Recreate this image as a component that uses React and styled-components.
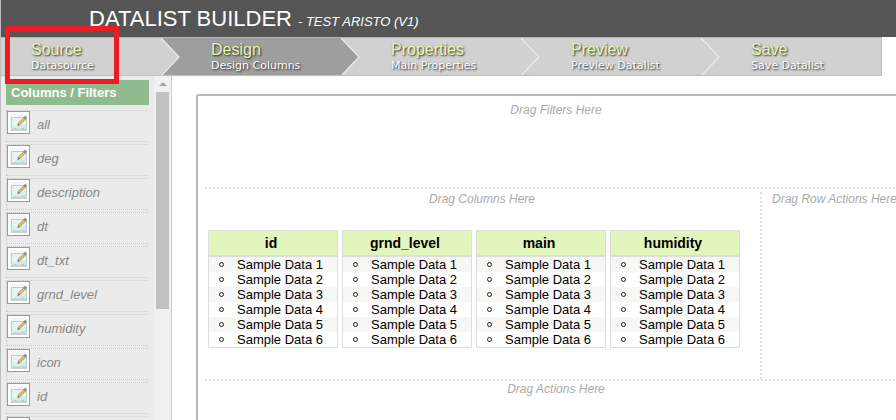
import React from 'react';
import styled, { createGlobalStyle } from 'styled-components';

const GlobalStyle = createGlobalStyle`
  *, *::before, *::after { box-sizing: border-box; }
  body {
    margin: 0;
    background: #fff;
    color: #000;
    font-family: "Liberation Sans", Arial, sans-serif;
    font-size: 13px;
    line-height: 15px;
  }
`;

const Page = styled.div`
  position: relative;
  display: flex;
  flex-direction: column;
  height: 100vh;
  overflow: hidden;
  border-left: 1px solid #bdbdbd;
`;

const Header = styled.header`
  flex: none;
  display: flex;
  align-items: baseline;
  gap: 6px;
  padding: 6px 0 6px 88px;
  background: #555;
  color: #fff;
`;

const Title = styled.h1`
  margin: 0;
  font-size: 22px;
  line-height: 25px;
  font-weight: normal;
`;

const Subtitle = styled.span`
  font-size: 13px;
  font-style: italic;
`;

const Steps = styled.nav`
  flex: none;
  display: flex;
`;

const Step = styled.a`
  flex: none;
  display: flex;
  width: ${(p) => (p.$last ? 161 : 180)}px;
  height: 39px;
  border-top: 1px solid #b5b5b5;
  border-bottom: 1px solid #bebebe;
  border-right: ${(p) => (p.$last ? '1px solid #bebebe' : '0')};
  background: ${(p) => (p.$active ? '#9e9e9e' : '#d1d1d1')};
  text-decoration: none;
`;

const StepText = styled.span`
  flex: 1;
  display: flex;
  flex-direction: column;
  padding: 3px 0 0 30px;
  white-space: nowrap;
`;

const StepName = styled.span`
  color: #e6f7b2;
  font-size: 16px;
  line-height: 18px;
  text-shadow: 1px 1px 2px #222;
`;

const StepNote = styled.span`
  color: #fff;
  font-family: "DejaVu Sans", Verdana, sans-serif;
  font-size: 11px;
  line-height: 13px;
  text-shadow: 1px 1px 2px #222;
`;

const ChevronSvg = styled.svg`
  flex: none;
  display: block;
  width: 20px;
  height: 37px;
`;

const Body = styled.div`
  flex: 1;
  display: flex;
  min-height: 0;
`;

const Sidebar = styled.aside`
  flex: none;
  display: flex;
  width: 171px;
  overflow: hidden;
  background: #ebebeb;
  border-right: 1px solid #ccc;
`;

const Palette = styled.div`
  flex: 1;
  padding: 4px 5px 0 5px;
`;

const PaletteTitle = styled.h2`
  margin: 0 0 5px;
  padding: 5px;
  height: 25px;
  background: #8fbc8f;
  color: #fff;
  font-size: 13px;
  line-height: 15px;
`;

const PaletteList = styled.ul`
  display: flex;
  flex-direction: column;
  gap: 2px;
  margin: 0;
  padding: 0 1px 0 0;
  list-style: none;
`;

const PaletteItem = styled.li`
  flex: none;
  display: flex;
  align-items: flex-start;
  gap: 7px;
  height: 32px;
  border: 1px dotted #ccc;
  border-right: 0;
  color: #888;
  font-style: italic;
`;

const ItemLabel = styled.span`
  padding-top: 6px;
`;

const IconFrame = styled.span`
  display: flex;
  width: 23px;
  height: 23px;
  padding: 2px;
  border: 1px solid #999;
  background: #fff;
`;

const Scrollbar = styled.div`
  flex: none;
  display: flex;
  flex-direction: column;
  align-items: center;
  width: 17px;
  background: #f1f1f1;
`;

const ScrollArrow = styled.svg`
  flex: none;
  width: 17px;
  height: 16px;
`;

const Thumb = styled.div`
  width: 13px;
  height: 63%;
  background: #c1c1c1;
`;

const Main = styled.main`
  flex: 1;
  min-width: 0;
  padding: 18px 0 0 24px;
  overflow: hidden;
`;

const Canvas = styled.div`
  display: flex;
  flex-direction: column;
  width: 100%;
  min-width: 720px;
  height: 400px;
  padding: 7px;
  border: 2px solid #b8b8b8;
  border-radius: 3px;
`;

const Hint = styled.p`
  margin: 0;
  color: #aaa;
  font-size: 12px;
  line-height: 15px;
  font-style: italic;
  text-align: center;
  white-space: nowrap;
`;

const Filters = styled.section`
  height: 86px;
  border-bottom: 2px dotted #ddd;
`;

const Middle = styled.section`
  display: flex;
  height: 192px;
  border-bottom: 2px dotted #ddd;
`;

const ColumnsZone = styled.div`
  flex: 1;
  padding: 3px 4px 0 3px;
`;

const RowActions = styled.div`
  flex: none;
  width: 147px;
  margin-top: 3px;
  border-left: 2px dotted #ddd;
`;

const Actions = styled.section`
  flex: 1;
  padding-top: 1px;
`;

const ColumnList = styled.div`
  display: flex;
  gap: 4px;
  margin-top: 23px;
`;

const ColumnCard = styled.div`
  width: 130px;
  border: 1px solid #ddd;
`;

const ColumnName = styled.h3`
  margin: 0;
  padding: 4px 4px 4px 0;
  border-bottom: 2px solid #ddd;
  background: #e2f5bd;
  font-size: 14px;
  line-height: 16px;
  text-align: center;
`;

const SampleList = styled.ul`
  margin: 0;
  padding: 0;
  list-style: none;
`;

const Sample = styled.li`
  display: flex;
  align-items: center;
  gap: 13px;
  padding-left: 10px;
  line-height: 15px;

  &:nth-child(odd) { background: #f7f7f5; }

  &::before {
    content: "";
    width: 5px;
    height: 5px;
    border: 1px solid #222;
    border-radius: 50%;
  }
`;

const Highlight = styled.div`
  position: absolute;
  left: 4px;
  top: 26px;
  width: 114px;
  height: 58px;
  border: 5px solid #ed1c24;
  pointer-events: none;
`;

const steps = [
  { name: 'Source', note: 'Datasource' },
  { name: 'Design', note: 'Design Columns', active: true },
  { name: 'Properties', note: 'Main Properties' },
  { name: 'Preview', note: 'Preview Datalist' },
  { name: 'Save', note: 'Save Datalist' },
];

const fields = [
  { id: 1, label: 'all' },
  { id: 2, label: 'deg' },
  { id: 3, label: 'description' },
  { id: 4, label: 'dt' },
  { id: 5, label: 'dt_txt' },
  { id: 6, label: 'grnd_level' },
  { id: 7, label: 'humidity' },
  { id: 8, label: 'icon' },
  { id: 9, label: 'id' },
  { id: 10 },
];
const columns = ['id', 'grnd_level', 'main', 'humidity'];
const samples = [1, 2, 3, 4, 5, 6];

function Chevron({ nextActive }) {
  return (
    <ChevronSvg viewBox="0 0 20 37" aria-hidden="true">
      <path d="M0 0L18 19L1 37H20V0Z" fill={nextActive ? '#9e9e9e' : '#d0d0d0'} />
      <path d="M0 0L18 19L1 37" fill="none" stroke="#ebebeb" strokeWidth="1.3" />
    </ChevronSvg>
  );
}

function EditIcon() {
  return (
    <svg width="17" height="17" viewBox="0 0 17 17" aria-hidden="true">
      <defs>
        <linearGradient id="paper" x1="0" y1="0" x2="0.4" y2="1">
          <stop offset="0" stopColor="#eef1f0" />
          <stop offset="0.6" stopColor="#e4f4f5" />
          <stop offset="1" stopColor="#cfe6e7" />
        </linearGradient>
      </defs>
      <rect width="17" height="17" fill="#f5f5f4" />
      <path d="M1 14H17V17H1Z" fill="#d3d3d3" />
      <path d="M1.5 3.500H16.500V15.500H13.500V14.500H11.500V15.500H6.500V14.500H4.500V15.500H1.500Z" fill="url(#paper)" stroke="#b9cfd0" />
      <path d="M8.500 10.500L15 4" stroke="#a58349" strokeWidth="2.600" />
      <path d="M9 10L14.500 4.500" stroke="#f7cf55" strokeWidth="1.400" />
      <path d="M13.500 3.500L15.500 5.500L17 3.800L15 1.800Z" fill="#94838a" />
      <path d="M7.400 11.900L8.100 9.800L9.500 11.200Z" fill="#6b5a42" />
    </svg>
  );
}

export default function App() {
  return (
    <Page>
      <GlobalStyle />
      <Header>
        <Title>DATALIST BUILDER</Title>
        <Subtitle>- TEST ARISTO (V1)</Subtitle>
      </Header>
      <Steps aria-label="Builder steps">
        {steps.map((step, i) => {
          const last = i === steps.length - 1;
          return (
            <Step key={step.name} href={`#${step.name.toLowerCase()}`} $active={step.active} $last={last}>
              <StepText>
                <StepName>{step.name}</StepName>
                <StepNote>{step.note}</StepNote>
              </StepText>
              {!last && <Chevron nextActive={steps[i + 1].active} />}
            </Step>
          );
        })}
      </Steps>
      <Body>
        <Sidebar>
          <Palette>
            <PaletteTitle>Columns / Filters</PaletteTitle>
            <PaletteList>
              {fields.map((field) => (
                <PaletteItem key={field.id}>
                  <IconFrame><EditIcon /></IconFrame>
                  {field.label && <ItemLabel>{field.label}</ItemLabel>}
                </PaletteItem>
              ))}
            </PaletteList>
          </Palette>
          <Scrollbar aria-hidden="true">
            <ScrollArrow viewBox="0 0 17 16"><path d="M5 10L9 6L13 10Z" fill="#a3a3a3" /></ScrollArrow>
            <Thumb />
          </Scrollbar>
        </Sidebar>
        <Main>
          <Canvas>
            <Filters><Hint>Drag Filters Here</Hint></Filters>
            <Middle>
              <ColumnsZone>
                <Hint>Drag Columns Here</Hint>
                <ColumnList>
                  {columns.map((column) => (
                    <ColumnCard key={column}>
                      <ColumnName>{column}</ColumnName>
                      <SampleList>
                        {samples.map((n) => <Sample key={n}>Sample Data {n}</Sample>)}
                      </SampleList>
                    </ColumnCard>
                  ))}
                </ColumnList>
              </ColumnsZone>
              <RowActions><Hint>Drag Row Actions Here</Hint></RowActions>
            </Middle>
            <Actions><Hint>Drag Actions Here</Hint></Actions>
          </Canvas>
        </Main>
      </Body>
      <Highlight />
    </Page>
  );
}
